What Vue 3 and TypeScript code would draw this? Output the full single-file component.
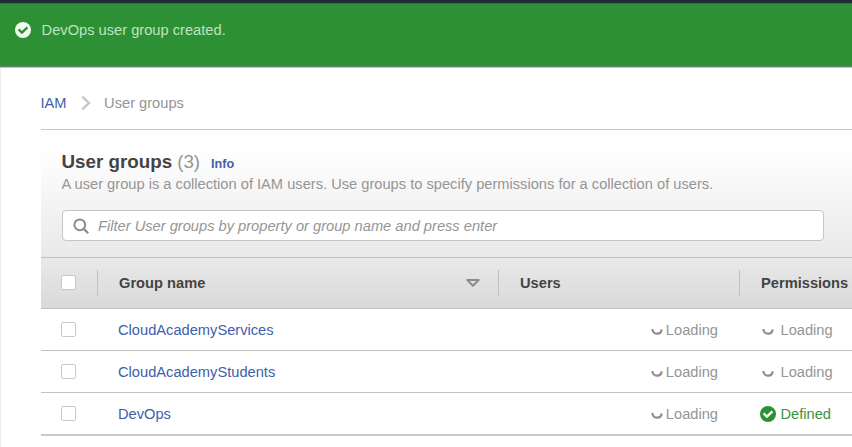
<script setup lang="ts">
type Permission = 'loading' | 'defined'

interface UserGroup {
  name: string
  permissions: Permission
}

const groups: UserGroup[] = [
  { name: 'CloudAcademyServices', permissions: 'loading' },
  { name: 'CloudAcademyStudents', permissions: 'loading' },
  { name: 'DevOps', permissions: 'defined' },
]
</script>

<template>
  <div class="page">
    <div class="flash">
      <svg class="flash-icon" viewBox="0 0 16 16">
        <circle cx="8" cy="8" r="8" fill="#f1faf1" />
        <path d="M3.6 7.4 6.9 10.6 12.4 5.3" fill="none" stroke="#2d9035" stroke-width="2.4" />
      </svg>
      <span>DevOps user group created.</span>
    </div>

    <main class="content">
      <nav class="breadcrumb">
        <a class="link">IAM</a>
        <svg class="chevron" viewBox="0 0 10 16">
          <path d="M1.2 1.6 8 8 1.2 14.4" fill="none" stroke="#c4c4c4" stroke-width="2.2" />
        </svg>
        <span>User groups</span>
      </nav>

      <section class="panel">
        <header class="panel-head">
          <div class="title">
            <h1>User groups</h1>
            <span class="count">(3)</span>
            <a class="info">Info</a>
          </div>
          <p class="description">A user group is a collection of IAM users. Use groups to specify permissions for a collection of users.</p>
          <div class="search">
            <svg class="search-icon" viewBox="0 0 16 16">
              <circle cx="6.8" cy="6.8" r="5.4" fill="none" stroke="#8b8b8b" stroke-width="2" />
              <path d="M10.5 10.5 15.2 15.2" fill="none" stroke="#8b8b8b" stroke-width="2.2" />
            </svg>
            <span>Filter User groups by property or group name and press enter</span>
          </div>
        </header>

        <div class="row row-head">
          <div class="cell check"><span class="box"></span></div>
          <div class="cell name">
            <span>Group name</span>
            <svg class="sort" viewBox="0 0 16 10">
              <path d="M2.2 1.9H13.8L8 7.8Z" fill="none" stroke="#8b8b8b" stroke-width="2" stroke-linejoin="round" />
            </svg>
          </div>
          <div class="cell users">Users</div>
          <div class="cell permissions">Permissions</div>
        </div>

        <div v-for="group in groups" :key="group.name" class="row row-body">
          <div class="cell check"><span class="box"></span></div>
          <div class="cell name"><a class="link">{{ group.name }}</a></div>
          <div class="cell users">
            <svg class="spinner" viewBox="0 0 12 8">
              <path d="M1.3 1C1.9 6.9 9.9 7.4 10.7 1.4" fill="none" stroke="#8d8d8d" stroke-width="2.2" />
            </svg>
            <span>Loading</span>
          </div>
          <div class="cell permissions" :class="group.permissions">
            <span class="status">
              <svg v-if="group.permissions === 'loading'" class="spinner" viewBox="0 0 12 8">
                <path d="M1.3 1C1.9 6.9 9.9 7.4 10.7 1.4" fill="none" stroke="#8d8d8d" stroke-width="2.2" />
              </svg>
              <svg v-else class="ok" viewBox="0 0 16 16">
                <circle cx="8" cy="8" r="8" fill="#2d9035" />
                <path d="M3.6 7.4 6.9 10.6 12.4 5.3" fill="none" stroke="#fff" stroke-width="2.4" />
              </svg>
            </span>
            <span>{{ group.permissions === 'loading' ? 'Loading' : 'Defined' }}</span>
          </div>
        </div>
      </section>
    </main>
  </div>
</template>

<style>
body {
  background: #fff;
  overflow: hidden;
}
</style>

<style scoped>
.page {
  box-sizing: border-box;
  width: 852px;
  height: 447px;
  overflow: hidden;
  font-family: "Liberation Sans", Arial, sans-serif;
  font-size: 14.66px;
  line-height: 18px;
  color: #959595;
  white-space: nowrap;
}

.flash {
  box-sizing: border-box;
  display: flex;
  align-items: flex-start;
  gap: 11px;
  height: 68px;
  padding: 18px 14.6px 0;
  border-top: 3px solid #1f2b37;
  border-bottom: 1px solid #b6c3b7;
  background: #2d9035;
  box-shadow: inset 0 1px #39703f, inset 0 -1px #62896a;
  color: #bde5bf;
}

.flash-icon {
  width: 16px;
  height: 16px;
  margin-top: 0.6px;
}

.content {
  box-sizing: border-box;
  height: 379px;
  padding: 26px 0 0 39.5px;
  border-left: 1px solid #eee;
}

.link {
  color: #4060ab;
}

.breadcrumb {
  display: flex;
  align-items: center;
  height: 18px;
  margin-bottom: 17px;
}

.chevron {
  width: 10px;
  height: 16px;
  margin: 0 13.5px 0 14px;
}

.panel {
  border-top: 1px solid #c8c8c8;
}

.panel-head {
  box-sizing: border-box;
  height: 127px;
  padding: 21px 28px 0 21px;
  background: linear-gradient(#fefefe 20%, #e9e9e9);
}

.title {
  display: flex;
  align-items: baseline;
  height: 22px;
  line-height: 22px;
}

h1 {
  margin: 0;
  font-size: 18.8px;
  font-weight: 700;
  color: #444;
}

.count {
  margin-left: 5px;
  font-size: 18.8px;
}

.info {
  margin-left: 11px;
  font-size: 12.6px;
  font-weight: 700;
  color: #4060ab;
}

.description {
  margin: 2px 0 0;
}

.search {
  box-sizing: border-box;
  display: flex;
  align-items: center;
  gap: 9.5px;
  height: 31px;
  width: 762px;
  margin-top: 17px;
  padding-left: 10px;
  border: 1px solid #c6c6c6;
  border-radius: 4px;
  background: #fff;
  font-style: italic;
}

.search-icon {
  width: 16px;
  height: 16px;
}

.row {
  box-sizing: border-box;
  display: grid;
  grid-template-columns: 56px 401px 241px 1fr;
  align-items: center;
}

.row-head {
  height: 52px;
  border-top: 1px solid #c2c2c2;
  border-bottom: 1px solid #c2c2c2;
  background: linear-gradient(#e9e9e9, #d9d9d9);
  font-weight: 700;
  color: #444;
}

.row-body {
  height: 42px;
  border-bottom: 1px solid #c2c2c2;
}

.row-body:last-child {
  height: 43px;
  border-bottom: 2px solid #c8c8c8;
}

.cell {
  display: flex;
  align-items: center;
}

.check {
  padding-left: 20.5px;
}

.box {
  box-sizing: border-box;
  width: 15px;
  height: 15px;
  margin-top: -1px;
  border: 1px solid #c9c9c9;
  border-radius: 2px;
  background: #fff;
}

.row-head .box {
  margin-top: -2px;
}

.name {
  padding-left: 21.5px;
}

.row-head .cell:not(.check) {
  height: 26px;
  border-left: 1px solid #c1c1c1;
}

.row-head .name {
  justify-content: space-between;
  padding-right: 17px;
}

.row-head .users,
.row-head .permissions {
  padding-left: 21.5px;
}

.sort {
  width: 16px;
  height: 10px;
}

.row-body .users {
  justify-content: flex-end;
  gap: 3px;
  padding-right: 20.5px;
}

.row-body .permissions {
  padding-left: 21px;
}

.spinner {
  width: 12px;
  height: 8px;
  margin-top: 4px;
}

.status {
  display: flex;
  justify-content: center;
  width: 16px;
  margin-right: 5px;
}

.ok {
  width: 16px;
  height: 16px;
}

.defined {
  color: #369440;
}
</style>
